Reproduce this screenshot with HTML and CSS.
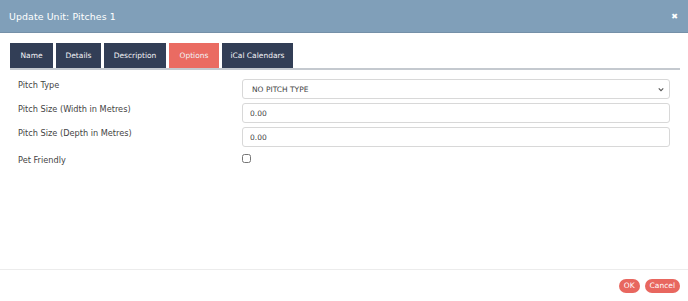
FILE: index.html
```html
<!DOCTYPE html>
<html lang="en">
<head>
	<meta charset="UTF-8" />
	<meta name="viewport" content="width=device-width, initial-scale=1.0" />
	<title>Update Unit</title>
	<link rel="stylesheet" href="styles.css">
</head>
<body>
	<div class="modal">
		<header class="modal-header">
			<h2>Update Unit: Pitches 1</h2>
			<span class="close">&#10006;</span>
		</header>

		<div class="modal-body">
			<nav class="tabs">
				<a class="tab">Name</a>
				<a class="tab">Details</a>
				<a class="tab">Description</a>
				<a class="tab active">Options</a>
				<a class="tab">iCal Calendars</a>
			</nav>

			<div class="form">
				<div class="row">
					<label>Pitch Type</label>
					<select class="field">
						<option>NO PITCH TYPE</option>
					</select>
				</div>
				<div class="row">
					<label>Pitch Size (Width in Metres)</label>
					<input class="field" type="text" value="0.00" />
				</div>
				<div class="row">
					<label>Pitch Size (Depth in Metres)</label>
					<input class="field" type="text" value="0.00" />
				</div>
				<div class="row check-row">
					<label>Pet Friendly</label>
					<input class="check" type="checkbox" />
				</div>
			</div>
		</div>

		<footer class="modal-footer">
			<button class="btn">OK</button>
			<button class="btn">Cancel</button>
		</footer>
	</div>
</body>
</html>
```

FILE: styles.css
```css
body {
	margin: 0;
	font-family: "DejaVu Sans", Arial, sans-serif;
	background-color: #fff;
	color: #333;
}
.modal {
	width: 688px;
	height: 301px;
	display: flex;
	flex-direction: column;
}
.modal-header {
	height: 32px;
	background-color: #809fb9;
	border-bottom: 1px solid #7590a8;
	display: flex;
	align-items: center;
	justify-content: space-between;
	padding: 0 9px;
}
.modal-header h2 {
	margin: 0;
	font-size: 9.4px;
	font-weight: normal;
	color: #fff;
	letter-spacing: 0.1px;
}
.close {
	color: #fff;
	font-size: 8px;
	font-weight: bold;
	margin-right: 1px;
}
.modal-body {
	flex: 1;
	padding: 10px 8px 0 10px;
}
.tabs {
	display: flex;
	gap: 3px;
	border-bottom: 2px solid #c4c9cf;
	height: 25px;
}
.tab {
	background-color: #323e56;
	color: #f2f3f6;
	font-size: 7.5px;
	display: flex;
	align-items: center;
	justify-content: center;
	height: 25px;
}
.tab:nth-child(1) { width: 43px; }
.tab:nth-child(2) { width: 45px; }
.tab:nth-child(3) { width: 62px; }
.tab:nth-child(4) { width: 50px; }
.tab:nth-child(5) { width: 71px; }
.tab.active {
	background-color: #ea6b62;
}
.form {
	padding: 9px 10px 0 8px;
	display: flex;
	flex-direction: column;
	gap: 4px;
}
.row {
	display: flex;
	align-items: flex-start;
}
.row label {
	width: 224px;
	font-size: 8.2px;
	color: #444;
	padding-top: 1px;
}
.field {
	flex: 1;
	height: 20px;
	box-sizing: border-box;
	border: 1px solid #d8d8d8;
	border-radius: 3px;
	background-color: #fff;
	font-family: inherit;
	font-size: 7.5px;
	color: #444;
	padding: 0 7px;
	margin: 0;
}
select.field {
	appearance: none;
	padding-left: 9px;
	background-image: url("data:image/svg+xml;utf8,<svg xmlns='http://www.w3.org/2000/svg' width='8' height='6' viewBox='0 0 8 6'><path d='M1 1.5 L4 4.5 L7 1.5' fill='none' stroke='%23555' stroke-width='1.5'/></svg>");
	background-repeat: no-repeat;
	background-position: right 5px center;
	background-size: 6px 5px;
}
.check-row label {
	padding-top: 4px;
}
.check {
	margin: 3px 0 0 0;
	width: 9px;
	height: 9px;
}
.modal-footer {
	height: 31px;
	border-top: 1px solid #ececec;
	display: flex;
	justify-content: flex-end;
	align-items: center;
	gap: 5px;
	padding: 0 8px 0 0;
}
.btn {
	background-color: #e8675f;
	color: #fff;
	border: none;
	border-radius: 8px;
	font-family: inherit;
	font-size: 7.5px;
	height: 14px;
	padding: 0 5px;
}
```
